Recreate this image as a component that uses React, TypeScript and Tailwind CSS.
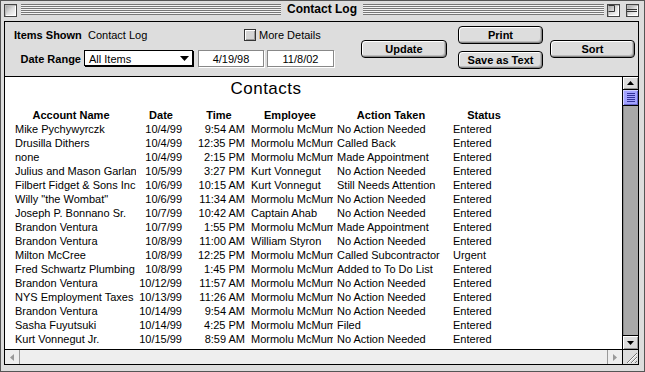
import React from "react";

type Contact = {
  name: string;
  date: string;
  time: string;
  employee: string;
  action: string;
  status: string;
};

const MM = "Mormolu McMummy";

const contacts: Contact[] = [
  { name: "Mike Pychywyrczk", date: "10/4/99", time: "9:54 AM", employee: MM, action: "No Action Needed", status: "Entered" },
  { name: "Drusilla Dithers", date: "10/4/99", time: "12:35 PM", employee: MM, action: "Called Back", status: "Entered" },
  { name: "none", date: "10/4/99", time: "2:15 PM", employee: MM, action: "Made Appointment", status: "Entered" },
  { name: "Julius and Mason Garland", date: "10/5/99", time: "3:27 PM", employee: "Kurt Vonnegut", action: "No Action Needed", status: "Entered" },
  { name: "Filbert Fidget & Sons Inc", date: "10/6/99", time: "10:15 AM", employee: "Kurt Vonnegut", action: "Still Needs Attention", status: "Entered" },
  { name: 'Willy "the Wombat"', date: "10/6/99", time: "11:34 AM", employee: MM, action: "No Action Needed", status: "Entered" },
  { name: "Joseph P. Bonnano Sr.", date: "10/7/99", time: "10:42 AM", employee: "Captain Ahab", action: "No Action Needed", status: "Entered" },
  { name: "Brandon Ventura", date: "10/7/99", time: "1:55 PM", employee: MM, action: "Made Appointment", status: "Entered" },
  { name: "Brandon Ventura", date: "10/8/99", time: "11:00 AM", employee: "William Styron", action: "No Action Needed", status: "Entered" },
  { name: "Milton McCree", date: "10/8/99", time: "12:25 PM", employee: MM, action: "Called Subcontractor", status: "Urgent" },
  { name: "Fred Schwartz Plumbing Inc", date: "10/8/99", time: "1:45 PM", employee: MM, action: "Added to To Do List", status: "Entered" },
  { name: "Brandon Ventura", date: "10/12/99", time: "11:57 AM", employee: MM, action: "No Action Needed", status: "Entered" },
  { name: "NYS Employment Taxes", date: "10/13/99", time: "11:26 AM", employee: MM, action: "No Action Needed", status: "Entered" },
  { name: "Brandon Ventura", date: "10/14/99", time: "9:54 AM", employee: MM, action: "No Action Needed", status: "Entered" },
  { name: "Sasha Fuyutsuki", date: "10/14/99", time: "4:25 PM", employee: MM, action: "Filed", status: "Entered" },
  { name: "Kurt Vonnegut Jr.", date: "10/15/99", time: "8:59 AM", employee: MM, action: "No Action Needed", status: "Entered" },
];

const Stripes = ({ className = "" }: { className?: string }) => (
  <div
    className={`mt-[3px] h-[11px] bg-[repeating-linear-gradient(to_bottom,#777777_0px,#777777_1px,#f4f4f4_1px,#f4f4f4_2px)] ${className}`}
  />
);

// little bevelled square used by the title bar widgets
const TitleBox = ({ children, className = "" }: { children?: React.ReactNode; className?: string }) => (
  <div
    className={`mt-[3px] w-[13px] h-[13px] border border-[#444] bg-linear-to-br from-[#9a9a9a] via-[#dddddd] to-[#ffffff] shadow-[inset_1px_1px_0_#bbbbbb,inset_-1px_-1px_0_#ffffff] relative ${className}`}
  >
    {children}
  </div>
);

const MacButton = ({ label, className = "" }: { label: string; className?: string }) => (
  <div
    className={`h-[18px] w-[85px] rounded-[4px] border border-black bg-[#dddddd] shadow-[inset_1px_1px_0_#ffffff,inset_-1px_-1px_0_#888888,inset_-2px_-2px_0_#bbbbbb] flex items-center justify-center font-bold leading-[14px] ${className}`}
  >
    {label}
  </div>
);

const Arrow = ({ dir, color }: { dir: "up" | "down" | "left" | "right"; color: string }) => {
  const pts = {
    up: "0,4 7,4 3.5,0",
    down: "0,0 7,0 3.5,4",
    left: "4,0 4,7 0,3.5",
    right: "0,0 0,7 4,3.5",
  }[dir];
  const vertical = dir === "up" || dir === "down";
  return (
    <svg width={vertical ? 7 : 4} height={vertical ? 4 : 7} viewBox={vertical ? "0 0 7 4" : "0 0 4 7"}>
      <polygon points={pts} fill={color} />
    </svg>
  );
};

export default function App() {
  return (
    <div className="w-[645px] h-[372px] border border-[#555555] bg-[#dddddd] flex flex-col pl-[3px] pr-[5px] pb-[6px] font-['Liberation_Sans',Arial,sans-serif] text-[11px] text-black overflow-hidden">
      {/* title bar */}
      <div className="h-[20px] -ml-[3px] -mr-[5px] flex items-start">
        <TitleBox className="ml-[3px]" />
        <Stripes className="ml-[4px] w-[260px]" />
        <div className="mt-[1px] w-[82px] text-center text-[12px] font-bold leading-[14px]">Contact Log</div>
        <Stripes className="flex-1" />
        <TitleBox className="ml-[3px] w-[12px]">
          <svg width="10" height="11" viewBox="0 0 10 11" className="absolute left-0 top-0">
            <path d="M0.5 0.5 H6.5 V6.5 H0.5" fill="none" stroke="#333" />
          </svg>
        </TitleBox>
        <TitleBox className="ml-[6px] mr-[5px] w-[12px]">
          <svg width="10" height="11" viewBox="0 0 10 11" className="absolute left-0 top-0">
            <path d="M0 4.5 H10 M0 6.5 H10" stroke="#333" />
          </svg>
        </TitleBox>
      </div>

      {/* window content */}
      <div className="flex-1 border border-black flex flex-col min-h-0">
        {/* control strip */}
        <div className="h-[55px] border-b border-black flex shrink-0">
          <div className="w-[335px] flex flex-col">
            <div className="mt-[6px] h-[14px] pl-[9px] flex items-center leading-[14px]">
              <span className="w-[74px] font-bold">Items Shown</span>
              <span className="w-[156px]">Contact Log</span>
              <span className="w-[12px] h-[12px] border border-[#333] bg-[#d4d4d4] shadow-[inset_1px_1px_0_#ffffff,inset_-1px_-1px_0_#999999]" />
              <span className="ml-[3px]">More Details</span>
            </div>
            <div className="mt-[8px] flex items-start leading-[14px]">
              <div className="w-[79px] pr-[3px] mt-[2px] text-right font-bold">Date Range</div>
              <div className="w-[109px] h-[16px] border border-black bg-white shadow-[1px_1px_0_#000] flex items-start justify-between pl-[4px] pr-[3px] pt-[1px]">
                <span>All Items</span>
                <svg width="9" height="5" viewBox="0 0 9 5" className="mt-[4px]">
                  <polygon points="0,0 9,0 4.5,5" fill="#000" />
                </svg>
              </div>
              <div className="ml-[5px] w-[66px] h-[17px] border border-[#888888] bg-white shadow-[1px_1px_0_#ffffff] pt-[1px] text-center">
                4/19/98
              </div>
              <div className="ml-[3px] w-[67px] h-[17px] border border-[#888888] bg-white shadow-[1px_1px_0_#ffffff] pt-[1px] text-center">
                11/8/02
              </div>
            </div>
          </div>
          <MacButton label="Update" className="ml-[21px] w-[86px] self-center" />
          <div className="ml-[11px] mt-[4px] flex flex-col gap-[7px]">
            <MacButton label="Print" />
            <MacButton label="Save as Text" />
          </div>
          <MacButton label="Sort" className="ml-[7px] self-center" />
        </div>

        {/* list + vertical scroller */}
        <div className="flex-1 flex min-h-0">
          <div className="flex-1 bg-white overflow-hidden whitespace-nowrap">
            <div className="w-[522px] pt-[3px] text-center text-[17px] leading-[18px] tracking-[0.5px]">Contacts</div>
            <div className="mt-[10px] h-[14px] pl-[10px] flex font-bold leading-[14px] text-center">
              <div className="w-[112px]">Account Name</div>
              <div className="w-[68px]">Date</div>
              <div className="w-[48px]">Time</div>
              <div className="w-[94px]">Employee</div>
              <div className="w-[108px]">Action Taken</div>
              <div className="w-[78px]">Status</div>
            </div>
            {contacts.map((c, i) => (
              <div key={i} className="h-[14px] pl-[10px] flex leading-[14px]">
                <div className="w-[121px] overflow-hidden">{c.name}</div>
                <div className="w-[46px] text-right">{c.date}</div>
                <div className="w-[63px] text-right">{c.time}</div>
                <div className="ml-[6px] w-[82px] overflow-hidden">{c.employee}</div>
                <div className="ml-[4px] w-[116px] overflow-hidden">{c.action}</div>
                <div>{c.status}</div>
              </div>
            ))}
          </div>

          <div className="w-[16px] border-l border-black bg-[#a9a9a9] flex flex-col">
            <div className="h-[13px] border-b border-black bg-[#dddddd] shadow-[inset_1px_1px_0_#ffffff,inset_-1px_-1px_0_#999999] flex items-center justify-center">
              <Arrow dir="up" color="#000" />
            </div>
            <div className="h-[16px] border-b border-black bg-[#a3a3ff] shadow-[inset_1px_1px_0_#d0d0ff,inset_-1px_-1px_0_#6666cc] flex flex-col items-center justify-center gap-[1px]">
              {[0, 1, 2, 3, 4].map((k) => (
                <div key={k} className="w-[8px] h-[1px] bg-[#33339a]" />
              ))}
            </div>
            <div className="flex-1 shadow-[inset_1px_0_0_#888888]" />
            <div className="h-[14px] border-t border-black bg-[#dddddd] shadow-[inset_1px_1px_0_#ffffff,inset_-1px_-1px_0_#999999] flex items-center justify-center">
              <Arrow dir="down" color="#000" />
            </div>
          </div>
        </div>

        {/* horizontal scroller (inactive) */}
        <div className="h-[15px] border-t border-black flex shrink-0">
          <div className="w-[15px] border-r border-[#999999] bg-[#eeeeee] flex items-center justify-center">
            <Arrow dir="left" color="#999999" />
          </div>
          <div className="flex-1 bg-[#eeeeee]" />
          <div className="w-[15px] border-l border-[#999999] bg-[#eeeeee] flex items-center justify-center">
            <Arrow dir="right" color="#999999" />
          </div>
          <div className="w-[16px] border-l border-black bg-[#dddddd] flex items-center justify-center">
            <svg width="14" height="13" viewBox="0 0 14 13">
              <path d="M3 12 L13 2 M7 12 L13 6 M11 12 L13 10" stroke="#777777" strokeWidth="1" />
              <path d="M4 12 L13 3 M8 12 L13 7" stroke="#ffffff" strokeWidth="1" />
            </svg>
          </div>
        </div>
      </div>
    </div>
  );
}
